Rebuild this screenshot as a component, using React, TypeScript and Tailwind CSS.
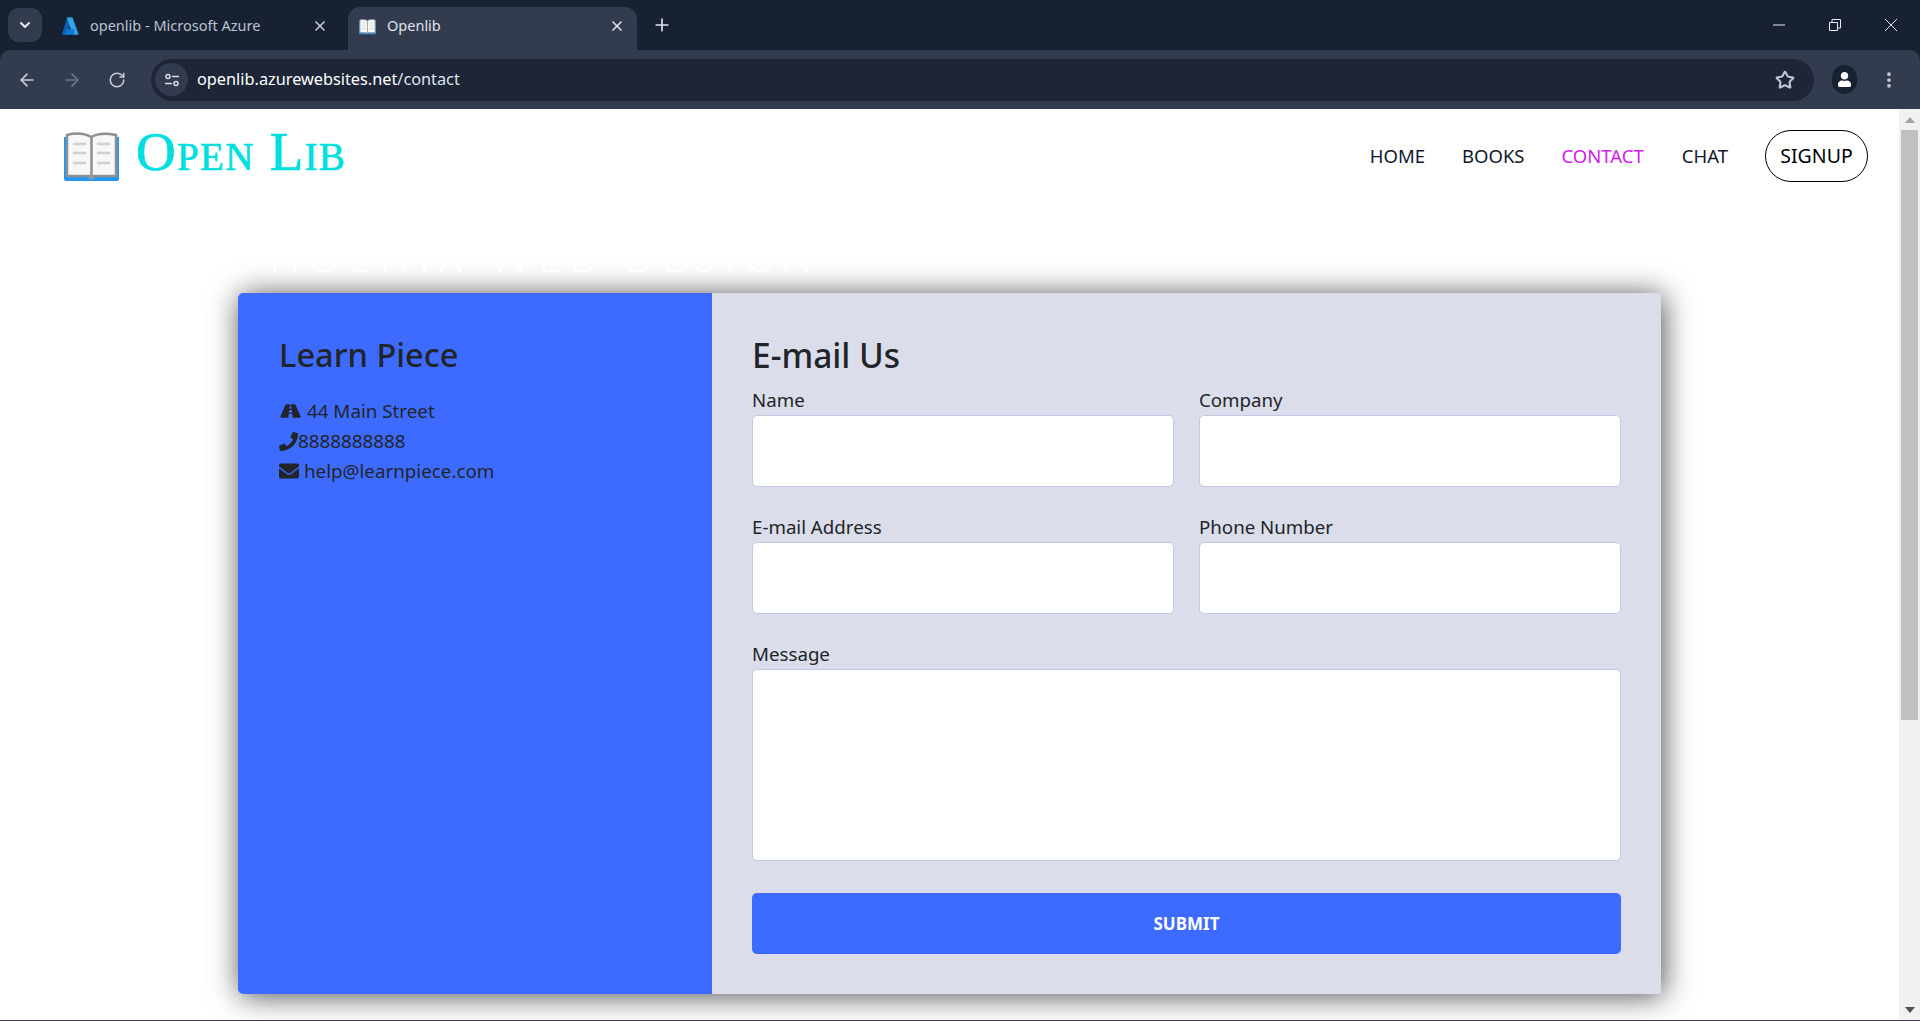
import { ArrowLeft, ArrowRight, ChevronDown, MoreVertical, Plus, RotateCw, Star, X } from 'lucide-react';
import { FaEnvelope, FaPhone, FaRoad, FaUser } from 'react-icons/fa';

const uiFont = { fontFamily: '"Noto Sans", "Open Sans", sans-serif' };

function BookIcon({ className }: { className: string }) {
  return (
    <svg viewBox="0 0 55 50" className={className}>
      <path d="M0 6h4v40h20l3.500 3 3.500-3h20v-40h4v42a2 2 0 0 1-2 2h-51a2 2 0 0 1-2-2z" fill="#2196f3" />
      <path d="M3 4c8-2 17-2 24 2c7-4 16-4 25 -2v41h-22l-2.500 2.500-2.500-2.500h-22z" fill="#f7f7f7" stroke="#8f8f8f" strokeWidth="2.500" />
      <path d="M27.500 6v39" stroke="#8f8f8f" strokeWidth="2.500" />
      <path d="M9 13h13M33 13h13M9 22h13M33 22h13M9 32h13M33 32h13" stroke="#d0d0d0" strokeWidth="2.500" />
    </svg>
  );
}

function AzureIcon() {
  return (
    <svg viewBox="0 0 18 18" className="w-[18px] h-[18px] shrink-0">
      <path d="M6.200 0.500h5.300l-5.700 16.800a0.700 0.700 0 0 1-0.700 0.500h-4.300l5.400-17.300z" fill="#0a5fb0" />
      <path d="M11.500 0.500l6 16.600c0.100 0.300-0.100 0.700-0.500 0.700h-5.200l-6.100-17.300z" fill="#2fa6e8" />
      <path d="M13.500 12h-7.700l-2.500 5.800h9.700z" fill="#0f78d4" />
    </svg>
  );
}

function BrowserChrome() {
  return (
    <div className="shrink-0 bg-[#182132]" style={uiFont}>
      <div className="h-[50px] flex items-end text-[14.500px]">
        <div className="self-start mt-2 ml-2 w-[34px] h-[34px] rounded-[11px] bg-[#323c4e] flex items-center justify-center">
          <ChevronDown className="w-4 h-4 text-[#e6eaf0]" strokeWidth={3} />
        </div>
        <div className="w-[306px] h-[43px] flex items-center pl-[19px] pr-[20px] pb-[5px] text-[#b9c2cf]">
          <AzureIcon />
          <span className="ml-[11px]">openlib - Microsoft Azure</span>
          <X className="w-4 h-4 ml-auto text-[#c6cdd8]" strokeWidth={2.500} />
        </div>
        <div className="w-[289px] h-[43px] rounded-t-[12px] bg-[#323c4e] flex items-center pl-[11px] pr-[12px] pb-[5px] text-[#dfe3ea]">
          <BookIcon className="w-[17px] h-[17px]" />
          <span className="ml-[11px]">Openlib</span>
          <X className="w-4 h-4 ml-auto text-[#e0e4ea]" strokeWidth={2.500} />
        </div>
        <div className="self-start mt-[15px] ml-[15px]">
          <Plus className="w-5 h-5 text-[#dfe3ea]" strokeWidth={2} />
        </div>
        <div className="ml-auto self-start flex items-center h-[50px] text-[#e8ebf0]">
          <svg viewBox="0 0 14 14" className="w-[14px] h-[14px] mr-[42px]"><path d="M1 7h12" stroke="currentColor" /></svg>
          <svg viewBox="0 0 14 14" className="w-[14px] h-[14px] mr-[42px]"><path d="M1.500 4.500h8v8h-8zM4 4.500v-3h8.500v8.500h-3" fill="none" stroke="currentColor" /></svg>
          <svg viewBox="0 0 14 14" className="w-[14px] h-[14px] mr-[22px]"><path d="M1 1l12 12M13 1l-12 12" stroke="currentColor" /></svg>
        </div>
      </div>
      <div className="h-[59px] bg-[#323c4e] rounded-t-[10px] flex items-center">
        <ArrowLeft className="w-5 h-5 ml-[17px] text-[#c6cdd8]" strokeWidth={2} />
        <ArrowRight className="w-5 h-5 ml-[25px] text-[#6f7888]" strokeWidth={2} />
        <RotateCw className="w-[18px] h-[18px] ml-[26px] text-[#c6cdd8]" strokeWidth={2} />
        <div className="ml-[25px] w-[1663px] h-[42px] rounded-full bg-[#1d2537] flex items-center pl-[4px]">
          <div className="w-[33px] h-[33px] rounded-full bg-[#323c4e] flex items-center justify-center">
            <svg viewBox="0 0 16 16" className="w-4 h-4 text-[#d7dce4]">
              <circle cx="4" cy="4.500" r="2" fill="none" stroke="currentColor" strokeWidth="1.500" />
              <path d="M8 4.500h7M1 11.500h7" stroke="currentColor" strokeWidth="1.500" />
              <circle cx="12" cy="11.500" r="2" fill="none" stroke="currentColor" strokeWidth="1.500" />
            </svg>
          </div>
          <span className="ml-[9px] text-[16.300px] text-[#dfe3ea]">
            <span className="text-white">openlib.azurewebsites.net</span>/contact
          </span>
          <Star className="w-[20px] h-[20px] ml-auto mr-[19px] text-[#c0c6d0]" strokeWidth={2.500} />
        </div>
        <div className="ml-[18px] w-[25px] h-[29px] rounded-full bg-[#182132] flex items-center justify-center">
          <FaUser className="w-[15px] h-[15px] text-white" />
        </div>
        <MoreVertical className="w-5 h-5 ml-[22px] text-[#c6cdd8]" strokeWidth={2.500} />
      </div>
    </div>
  );
}

function Field({ label, className, children }: { label: string; className?: string; children?: React.ReactNode }) {
  return (
    <label className={`block ${className ?? ''}`}>
      <span className="block h-[28px] leading-[26px] text-[18.700px] text-[#212529]">{label}</span>
      {children ?? <input className="block w-full h-[72px] bg-white border border-[#c1c9e6] rounded-[5px]" />}
    </label>
  );
}

export default function App() {
  return (
    <div className="h-[1021px] flex flex-col overflow-hidden bg-white" style={uiFont}>
      <BrowserChrome />
      <div className="flex-1 min-h-0 flex">
        <div className="flex-1 min-w-0">
          <nav className="h-[94px] flex items-center pl-[64px] pr-[31px]">
            <BookIcon className="w-[55px] h-[50px]" />
            <span
              className="ml-[17px] mb-[9px] text-[55px] leading-none tracking-[1.300px] text-[#00dfe0] [font-variant:small-caps] [-webkit-text-stroke:0.7px_#00dfe0]"
              style={{ fontFamily: '"Liberation Serif", serif' }}
            >
              Open Lib
            </span>
            <div className="ml-auto flex items-center text-[18.500px] text-[#10182c]">
              <a className="mr-[37px]">HOME</a>
              <a className="mr-[37px]">BOOKS</a>
              <a className="mr-[38px] text-[#d020ee]">CONTACT</a>
              <a className="mr-[37px]">CHAT</a>
              <a className="w-[103px] h-[52px] rounded-full border border-black text-[19.500px] text-black flex items-center justify-center">SIGNUP</a>
            </div>
          </nav>
          <div className="relative z-10 h-[90px] flex items-end justify-start pl-[238px] pb-[16px]">
            <h2
              className="text-[40px] leading-none font-light tracking-[8.500px] text-white uppercase"
              style={{ fontFamily: 'Lato, sans-serif' }}
            >
              Phoenix Web Design
            </h2>
          </div>
          <div className="w-[1423px] h-[701px] mx-auto flex rounded-l-[5px] shadow-[2px_2px_30px_rgba(0,0,0,0.7)] text-[#212529]">
            <div className="w-[474px] bg-[#3e6bff] rounded-l-[5px] pl-[41px] pt-[40px]">
              <h3 className="text-[32.600px] leading-[44px] font-medium">Learn Piece</h3>
              <ul className="mt-[19px] text-[18.800px] leading-[30px]">
                <li className="flex items-center"><FaRoad className="w-[23px] h-[18px] mr-[5px]" />44 Main Street</li>
                <li className="flex items-center"><FaPhone className="w-[19px] h-[19px]" />8888888888</li>
                <li className="flex items-center"><FaEnvelope className="w-5 h-5 mr-[5px]" />help@learnpiece.com</li>
              </ul>
            </div>
            <div className="flex-1 bg-[#dbddea] px-[40px] pt-[40px]">
              <h3 className="text-[33.500px] leading-[44px] font-medium">E-mail Us</h3>
              <form className="mt-[10px]">
                <div className="grid grid-cols-2 gap-x-[25px] gap-y-[27px]">
                  <Field label="Name" />
                  <Field label="Company" />
                  <Field label="E-mail Address" />
                  <Field label="Phone Number" />
                </div>
                <Field label="Message" className="mt-[27px]">
                  <textarea className="block w-full h-[192px] resize-none bg-white border border-[#c1c9e6] rounded-[5px]" />
                </Field>
                <button
                  type="button"
                  className="mt-[32px] w-full h-[61px] rounded-[5px] bg-[#3e6bff] text-white text-[17px] font-bold"
                >
                  SUBMIT
                </button>
              </form>
            </div>
          </div>
        </div>
        <div className="w-[21px] shrink-0 bg-[#f1f1f1] flex flex-col items-center">
          <div className="h-[21px] flex items-center justify-center">
            <div className="w-0 h-0 border-x-[5px] border-x-transparent border-b-[6px] border-b-[#a3a3a3]" />
          </div>
          <div className="w-[17px] h-[590px] bg-[#c1c1c1]" />
          <div className="mt-auto h-[20px] flex items-center justify-center">
            <div className="w-0 h-0 border-x-[5px] border-x-transparent border-t-[6px] border-t-[#505050]" />
          </div>
        </div>
      </div>
      <div className="h-px shrink-0 bg-[#4a3a5e]" />
    </div>
  );
}
